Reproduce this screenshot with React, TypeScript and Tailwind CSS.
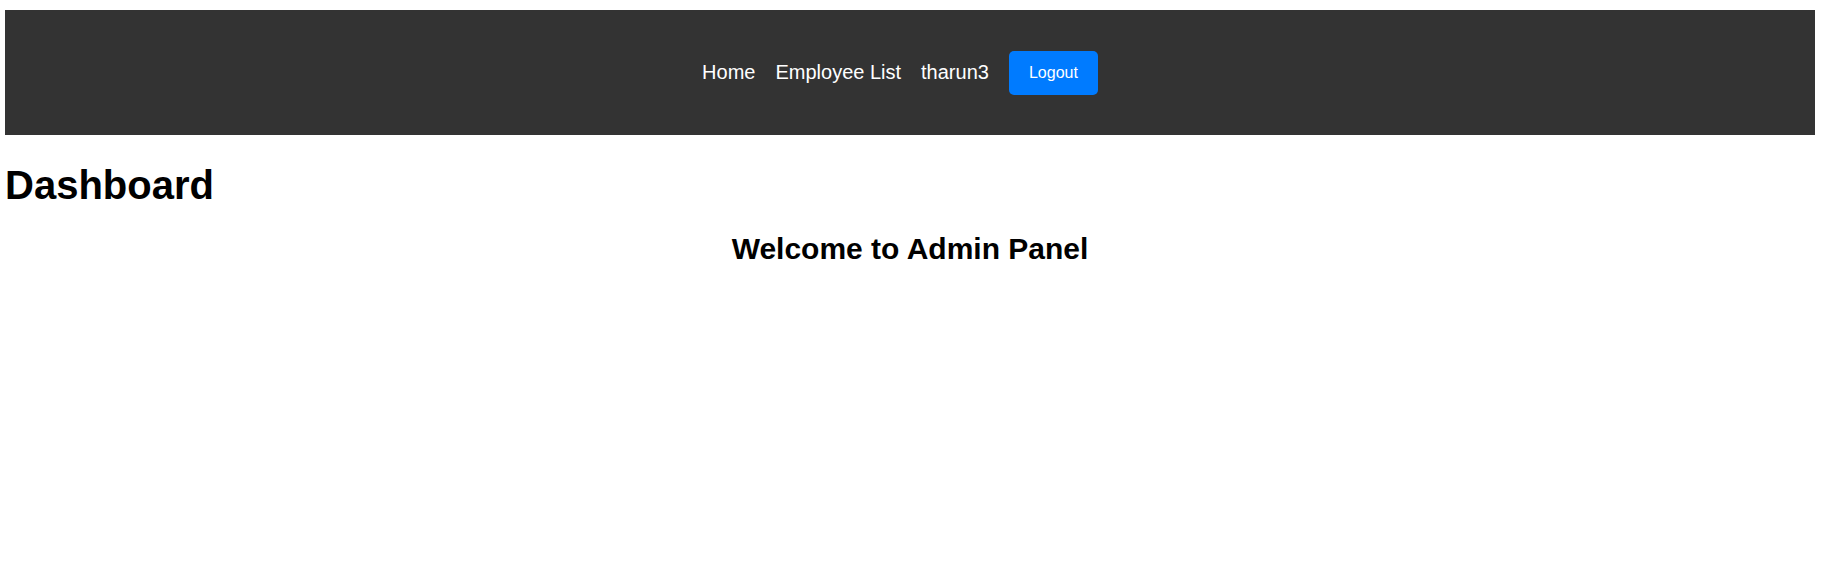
export default function App() {
  return (
    <div className="min-h-[574px] bg-white" style={{ fontFamily: '"Liberation Sans", Arial, sans-serif' }}>
      <div className="ml-[5px] w-[1810px] pt-[10px]">
        <header className="flex h-[125px] items-center justify-center bg-[#333333]">
          <nav className="flex items-center">
            <a className="mr-[20px] text-[20px] leading-[23px] text-white">Home</a>
            <a className="mr-[20px] text-[20px] leading-[23px] text-white">Employee List</a>
            <span className="mr-[20px] text-[20px] leading-[23px] text-white">tharun3</span>
            <button className="mr-[20px] flex h-[44px] w-[89px] items-center justify-center rounded-[5px] bg-[#007bff] text-[16px] text-white">
              Logout
            </button>
          </nav>
        </header>
        <h1 className="mt-[27px] text-[40px] font-bold leading-[46px] text-black">Dashboard</h1>
        <h2 className="mt-[24px] text-center text-[30px] font-bold leading-[34px] text-black">Welcome to Admin Panel</h2>
      </div>
    </div>
  );
}
